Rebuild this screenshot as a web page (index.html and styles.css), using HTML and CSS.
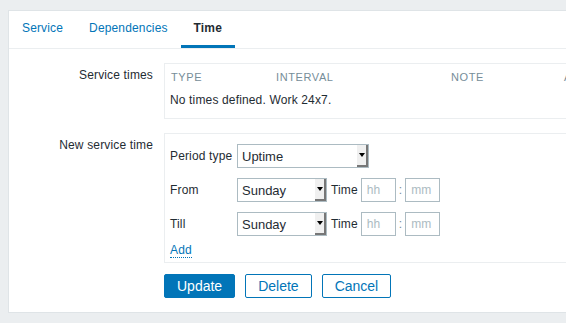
FILE: index.html
```html
<!DOCTYPE html>
<html lang="en">
<head>
    <meta charset="UTF-8">
    <title>Service time</title>
    <link rel="stylesheet" href="styles.css">
</head>
<body>

<div class="container">
    <ul class="tabs">
        <li><a href="#">Service</a></li>
        <li><a href="#">Dependencies</a></li>
        <li class="active"><a href="#">Time</a></li>
    </ul>

    <form class="form">
        <div class="row">
            <label class="row-label">Service times</label>
            <div class="field list-box">
                <table class="list">
                    <thead>
                        <tr>
                            <th class="col-type">Type</th>
                            <th class="col-interval">Interval</th>
                            <th class="col-note">Note</th>
                            <th>Action</th>
                        </tr>
                    </thead>
                    <tbody>
                        <tr><td colspan="4">No times defined. Work 24x7.</td></tr>
                    </tbody>
                </table>
            </div>
        </div>

        <div class="row">
            <label class="row-label">New service time</label>
            <div class="field time-box">
                <div class="sub-row">
                    <label class="sub-label">Period type</label>
                    <span class="select wide"><select><option>Uptime</option></select><span class="arrow"></span></span>
                </div>
                <div class="sub-row">
                    <label class="sub-label">From</label>
                    <span class="select"><select><option>Sunday</option></select><span class="arrow"></span></span>
                    <span class="time-label">Time</span>
                    <input type="text" class="time" placeholder="hh">
                    <span class="colon">:</span>
                    <input type="text" class="time" placeholder="mm">
                </div>
                <div class="sub-row">
                    <label class="sub-label">Till</label>
                    <span class="select"><select><option>Sunday</option></select><span class="arrow"></span></span>
                    <span class="time-label">Time</span>
                    <input type="text" class="time" placeholder="hh">
                    <span class="colon">:</span>
                    <input type="text" class="time" placeholder="mm">
                </div>
                <a href="#" class="add">Add</a>
            </div>
        </div>

        <div class="buttons">
            <button type="button" class="btn primary">Update</button>
            <button type="button" class="btn">Delete</button>
            <button type="button" class="btn">Cancel</button>
        </div>
    </form>
</div>

</body>
</html>
```

FILE: styles.css
```css
html, body {
    margin: 0;
    overflow: hidden;
}
body {
    font-family: "Liberation Sans", Arial, sans-serif;
    font-size: 12px;
    letter-spacing: 0.15px;
    color: #1f2c33;
    background-color: #ebeef0;
    padding: 10px 0 0 8px;
    width: 566px;
    height: 323px;
    box-sizing: border-box;
}
.container {
    background-color: #fff;
    border: 1px solid #dfe4e7;
    width: 640px;
    height: 303px;
    box-sizing: border-box;
}
.tabs {
    list-style: none;
    margin: 0;
    padding: 0;
    display: flex;
    height: 37px;
    border-bottom: 1px solid #ebeef0;
}
.tabs li {
    padding: 0 13px;
    border-bottom: 3px solid transparent;
    display: flex;
    align-items: center;
}
.tabs a {
    color: #0275b8;
    text-decoration: none;
    font-size: 12px;
}
.tabs .active {
    border-bottom-color: #0275b8;
}
.tabs .active a {
    color: #1f2c33;
    font-weight: bold;
}
.form {
    padding-top: 14px;
}
.row {
    display: flex;
    margin-bottom: 14px;
}
.row-label {
    width: 144px;
    text-align: right;
    padding: 5px 11px 0 0;
    flex: none;
}
.field {
    border: 1px solid #ebeef0;
    flex: 1;
}
.list-box {
    height: 54px;
}
.list {
    border-collapse: collapse;
    width: 100%;
}
.list th {
    text-align: left;
    font-weight: normal;
    text-transform: uppercase;
    color: #768d99;
    font-size: 11px;
    letter-spacing: 0.6px;
    padding: 7px 6px 1px 6px;
}
.col-type { width: 93px; }
.col-interval { width: 163px; }
.col-note { width: 101px; }
.list td {
    padding: 9px 5px 0 5px;
}
.time-box {
    padding: 10px 5px 0 5px;
    height: 118px;
}
.sub-row {
    display: flex;
    align-items: center;
    height: 24px;
    margin-bottom: 10px;
}
.sub-label {
    width: 67px;
    flex: none;
}
.select {
    position: relative;
    display: inline-block;
    width: 90px;
    height: 24px;
}
.select.wide {
    width: 132px;
}
.select select {
    appearance: none;
    -webkit-appearance: none;
    width: 100%;
    height: 100%;
    border: 1px solid #acbbc2;
    background: #fff;
    font-family: inherit;
    font-size: 13px;
    color: #1f2c33;
    padding: 0 4px;
    margin: 0;
    border-radius: 0;
}
.select .arrow {
    position: absolute;
    right: 1px;
    top: 1px;
    bottom: 1px;
    width: 11px;
    background: #f0f0f0;
    border-right: 2px solid #777;
    border-bottom: 2px solid #777;
    box-sizing: border-box;
}
.select .arrow::after {
    content: "";
    position: absolute;
    left: 2px;
    top: 8px;
    border-left: 3px solid transparent;
    border-right: 3px solid transparent;
    border-top: 4px solid #000;
}
.time-label {
    margin: 0 3px 0 4px;
}
.time {
    width: 35px;
    height: 24px;
    box-sizing: border-box;
    border: 1px solid #acbbc2;
    font-family: inherit;
    font-size: 12px;
    padding: 0 5px;
    margin: 0;
}
.time::placeholder {
    color: #acbbc2;
}
.colon {
    margin: 0 3px;
    color: #768d99;
}
.add {
    color: #0275b8;
    text-decoration: none;
    border-bottom: 1px dotted #0275b8;
    display: table;
    margin-top: -3px;
    line-height: 14px;
}
.buttons {
    display: flex;
    gap: 10px;
    padding-left: 155px;
    margin-top: -3px;
}
.btn {
    font-family: inherit;
    font-size: 14px;
    height: 24px;
    padding: 0 12px;
    background: #fff;
    color: #0275b8;
    border: 1px solid #0275b8;
    border-radius: 2px;
}
.btn.primary {
    background: #0275b8;
    color: #fff;
}
```
